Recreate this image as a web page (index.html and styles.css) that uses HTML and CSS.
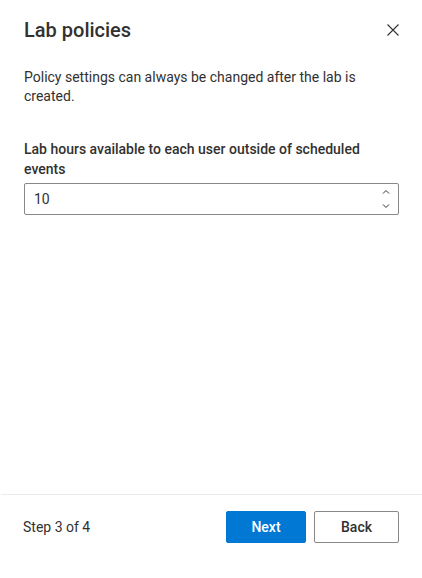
FILE: index.html
```html
<!DOCTYPE html>
<html>
<head>
<meta charset="utf-8">
<link rel="stylesheet" href="styles.css">
</head>
<body>
<div class="panel">
  <div class="content">
    <div class="header">
      <h1 class="title">Lab policies</h1>
      <button class="close" aria-label="Close">
        <svg width="12" height="12" viewBox="0 0 12 12"><path d="M0.5 0.5 L11.5 11.5 M11.5 0.5 L0.5 11.5" stroke="#323130" stroke-width="1.1" fill="none"/></svg>
      </button>
    </div>
    <p class="desc">Policy settings can always be changed after the lab is created.</p>
    <div class="field">
      <label class="label">Lab hours available to each user outside of scheduled events</label>
      <div class="input">
        <span class="value">10</span>
        <div class="spin">
          <svg width="8" height="6" viewBox="0 0 8 6"><path d="M1 4.5 L4 1.5 L7 4.5" stroke="#323130" stroke-width="1" fill="none"/></svg>
          <svg width="8" height="6" viewBox="0 0 8 6"><path d="M1 1.5 L4 4.5 L7 1.5" stroke="#323130" stroke-width="1" fill="none"/></svg>
        </div>
      </div>
    </div>
  </div>
  <div class="footer">
    <span class="step">Step 3 of 4</span>
    <div class="actions">
      <button class="btn primary">Next</button>
      <button class="btn secondary">Back</button>
    </div>
  </div>
</div>
</body>
</html>
```
FILE: styles.css
```css
* { box-sizing: border-box; }
html, body { margin: 0; padding: 0; background: #fff; }
body {
  font-family: Roboto, "Noto Sans", sans-serif;
  color: #323130;
  width: 422px;
  height: 578px;
}
.panel {
  display: flex;
  flex-direction: column;
  height: 578px;
}
.content {
  flex: 1;
  padding: 0 23px 0 24px;
}
.header {
  display: flex;
  justify-content: space-between;
  align-items: center;
  padding-top: 15px;
  height: 44px;
}
.title {
  margin: 0;
  font-size: 20px;
  font-weight: 500;
  line-height: 28px;
  color: #323130;
}
.close {
  border: none;
  background: none;
  padding: 0;
  width: 12px;
  height: 12px;
  margin: 1px 0 0 0;
  display: flex;
}
.desc {
  margin: 24px 0 0 0;
  font-size: 14px;
  line-height: 19px;
  color: #323130;
  padding-right: 40px;
}
.field { margin-top: 33px; }
.label {
  display: block;
  font-size: 14px;
  font-weight: 500;
  line-height: 20px;
  padding: 0 20px 4px 0;
}
.input {
  height: 32px;
  border: 1px solid #8a8886;
  border-radius: 2px;
  display: flex;
  align-items: center;
  justify-content: space-between;
  padding: 0 8px 0 9px;
}
.value { font-size: 14px; line-height: 20px; }
.spin {
  display: flex;
  flex-direction: column;
  gap: 8px;
}
.footer {
  border-top: 1px solid #edebe9;
  margin-left: 1px;
  height: 84px;
  display: flex;
  align-items: flex-start;
  justify-content: space-between;
  padding: 16px 23px 0 22px;
}
.step { font-size: 14px; line-height: 32px; }
.actions { display: flex; gap: 8px; }
.btn {
  height: 32px;
  border-radius: 2px;
  font-family: inherit;
  font-size: 14px;
  font-weight: 500;
  padding: 0 16px;
}
.primary {
  width: 80px;
  background: #0078d4;
  border: 1px solid #0078d4;
  color: #fff;
}
.secondary {
  width: 85px;
  background: #fff;
  border: 1px solid #8a8886;
  color: #323130;
}
```
